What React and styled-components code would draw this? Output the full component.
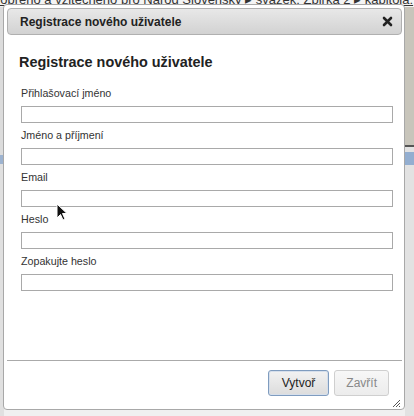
import React from "react";
import styled, { createGlobalStyle } from "styled-components";

const GlobalStyle = createGlobalStyle`
  html, body {
    margin: 0;
    padding: 0;
    width: 414px;
    height: 416px;
    overflow: hidden;
    font-family: "Liberation Sans", Arial, sans-serif;
  }
`;

const Page = styled.div`
  position: relative;
  width: 414px;
  height: 416px;
  background: #e9e9e9;
  overflow: hidden;
  display: flex;
  flex-direction: column;
`;

const Crumbs = styled.div`
  margin-top: -8px;
  margin-left: -7px;
  white-space: nowrap;
  font-size: 13px;
  line-height: 15px;
  color: #333;
  text-decoration: underline;
  background: #f4f4f4;
`;

const Behind = styled.div`
  flex: 1;
  display: flex;
`;

const Rail = styled.div`
  width: ${(p) => p.w}px;
  display: flex;
  flex-direction: column;
  padding-top: ${(p) => p.pt}px;
  background: ${(p) => p.bg};
`;

const Strip = styled.div`
  height: ${(p) => p.h}px;
  flex: ${(p) => (p.grow ? 1 : "none")};
  background: ${(p) => p.bg};
`;

const Middle = styled.div`
  flex: 1;
  background: #f0f0f0;
`;

const Dialog = styled.div`
  position: absolute;
  left: 3px;
  top: 4px;
  width: 402px;
  height: 406px;
  box-sizing: border-box;
  border: 1px solid #a8a8a8;
  border-radius: 4px;
  background: #fff;
  padding: 3px 2px 0 3px;
  display: flex;
  flex-direction: column;
`;

const TitleBar = styled.div`
  height: 25px;
  border: 1px solid #b0b0b0;
  border-radius: 4px;
  background: linear-gradient(#e8e8e8, #d2d2d2);
  display: flex;
  align-items: center;
  justify-content: space-between;
  padding: 0 8px 0 12px;
  font-size: 12px;
  font-weight: bold;
  color: #222;
`;

const Body = styled.div`
  flex: 1;
  padding: 19px 9px 0 12px;
`;

const Heading = styled.h2`
  margin: 0 0 17px 0;
  font-size: 14.4px;
  font-weight: bold;
  color: #222;
`;

const Field = styled.div`
  display: flex;
  flex-direction: column;
  margin: 0 0 6px 2px;
`;

const Label = styled.label`
  font-size: 10.7px;
  color: #333;
  margin: 0 0 6px 0;
  line-height: 13px;
`;

const Input = styled.div`
  height: 15px;
  border: 1px solid #a9a9a9;
  background: #fff;
`;

const Footer = styled.div`
  border-top: 1px solid #aaa;
  height: 49px;
  display: flex;
  justify-content: flex-end;
  align-items: flex-start;
  gap: 5px;
  padding: 9px 13px 0 0;
  box-sizing: border-box;
  position: relative;
`;

const Button = styled.button`
  height: 26px;
  padding: 0 ${(p) => (p.primary ? 13 : 11)}px;
  border-radius: 3px;
  font-family: "Liberation Sans", Arial, sans-serif;
  font-size: 12px;
  color: ${(p) => (p.primary ? "#222" : "#888")};
  border: 1px solid ${(p) => (p.primary ? "#7f9cbf" : "#cfcfcf")};
  background: ${(p) =>
    p.primary ? "linear-gradient(#f2f2f2, #dcdcdc)" : "linear-gradient(#f7f7f7, #ececec)"};
  box-shadow: ${(p) => (p.primary ? "inset 0 0 0 1px #d6dfeb" : "none")};
`;

const Grip = styled.svg`
  position: absolute;
  right: 1px;
  bottom: 1px;
`;

const Cursor = styled.svg`
  position: absolute;
  left: 56px;
  top: 203px;
`;

export default function App() {
  const fields = [
    "Přihlašovací jméno",
    "Jméno a příjmení",
    "Email",
    "Heslo",
    "Zopakujte heslo",
  ];
  return (
    <Page>
      <GlobalStyle />
      <Crumbs>
        dobrého a vzitečného pro Národ Slovenský ▸ svazek: Zbirka 2 ▸ kapitola:
      </Crumbs>
      <Behind>
        <Rail w={4} pt={148} bg="#dcdcdc">
          <Strip h={9} bg="#9db3d0" />
          <Strip grow bg="#e0e0e0" />
        </Rail>
        <Middle />
        <Rail w={9} pt={0} bg="#e2e2e2">
          <Strip h={138} bg="#c8c5bb" />
          <Strip h={2} bg="#555" />
          <Strip h={5} bg="#e2e2e2" />
          <Strip h={13} bg="#93aed0" />
          <Strip grow bg="#e2e2e2" />
        </Rail>
      </Behind>
      <Dialog>
        <TitleBar>
          <span>Registrace nového uživatele</span>
          <svg width="11" height="11" viewBox="0 0 11 11">
            <path d="M2 2 L9 9 M9 2 L2 9" stroke="#222" strokeWidth="2.6" strokeLinecap="round" />
          </svg>
        </TitleBar>
        <Body>
          <Heading>Registrace nového uživatele</Heading>
          {fields.map((f) => (
            <Field key={f}>
              <Label>{f}</Label>
              <Input />
            </Field>
          ))}
        </Body>
        <Footer>
          <Button primary>Vytvoř</Button>
          <Button>Zavřít</Button>
          <Grip width="10" height="10" viewBox="0 0 10 10">
            <path d="M9 2 L2 9 M9 5 L5 9 M9 8 L8 9" stroke="#555" strokeWidth="1" />
          </Grip>
        </Footer>
      </Dialog>
      <Cursor width="12" height="19" viewBox="0 0 12 19">
        <path
          d="M1 1 L1 15 L4.5 11.5 L7 17 L9 16 L6.5 10.5 L11 10.5 Z"
          fill="#111"
          stroke="#fff"
          strokeWidth="1"
        />
      </Cursor>
    </Page>
  );
}
